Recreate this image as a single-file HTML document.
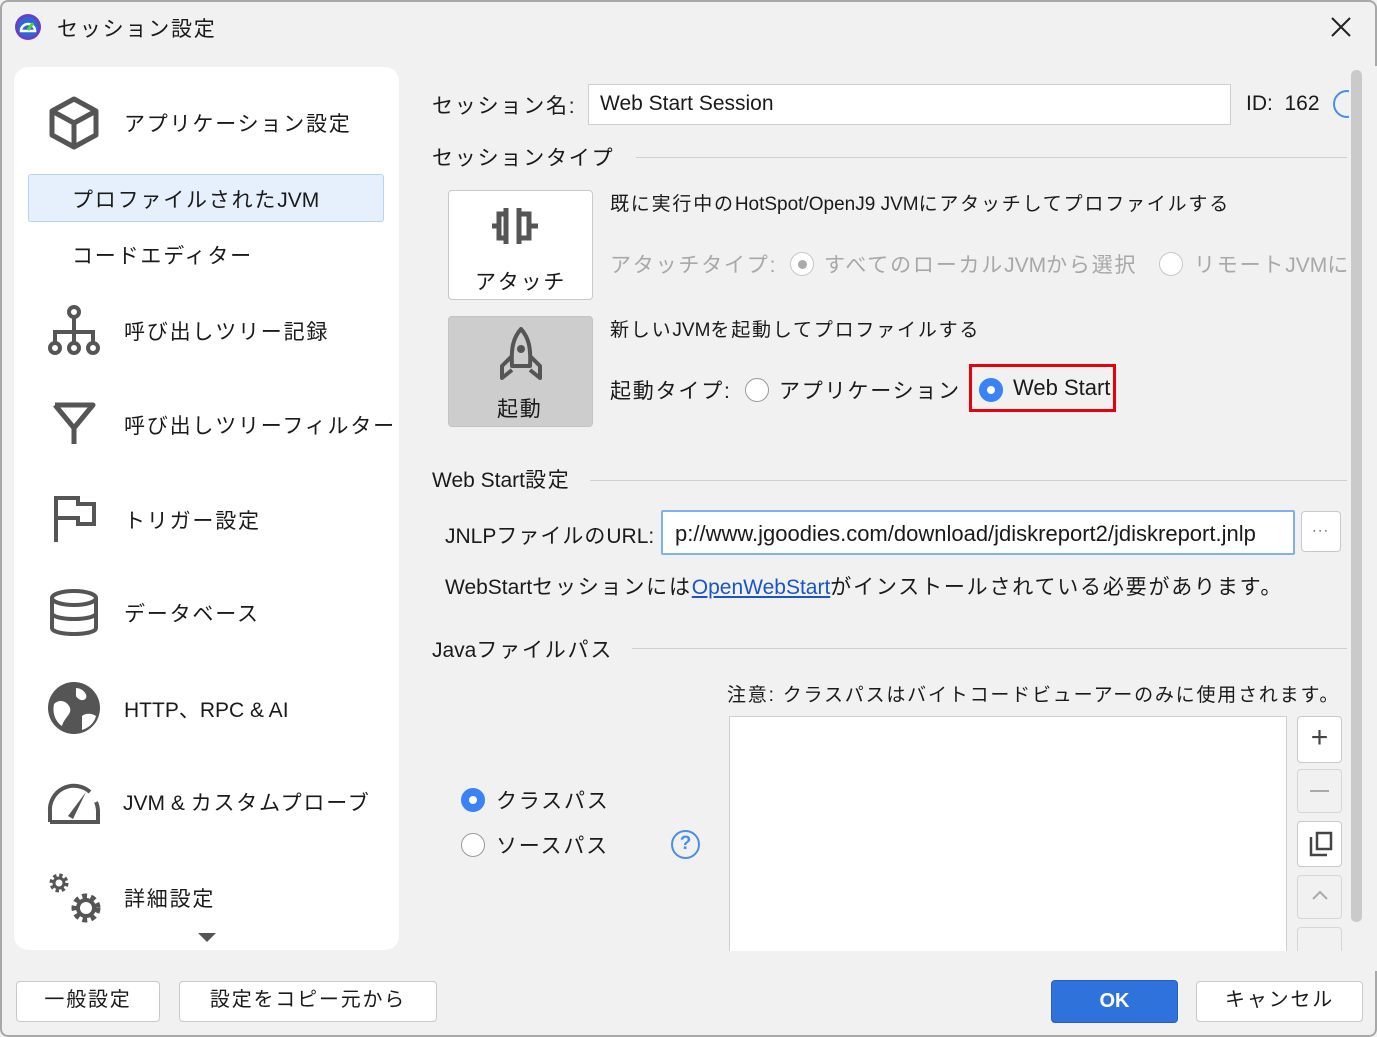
<!DOCTYPE html>
<html><head><meta charset="utf-8"><style>
*{margin:0;padding:0;box-sizing:border-box}
body{width:1377px;height:1037px;background:#f1f1f1;font-family:"Liberation Sans","Noto Sans CJK JP",sans-serif;color:#1a1a1a;position:relative;overflow:hidden;letter-spacing:1.8px}
.a{position:absolute;white-space:nowrap}
.l{letter-spacing:0}
.win{position:absolute;left:0;top:0;width:1377px;height:1037px;border:2px solid #a8a8a8;border-radius:8px}
.side{position:absolute;left:14px;top:67px;width:385px;height:883px;background:#fff;border-radius:14px}
.t20{font-size:21px}
.t19{font-size:19px}
.btn{position:absolute;background:#fff;border:1.5px solid #c9c9c9;border-radius:4px;text-align:center}
.sep{position:absolute;height:1px;background:#d0d0d0}
.radio{position:absolute;width:24px;height:24px;border-radius:50%;border:1.5px solid #9a9a9a;background:#fff}
.radio.on{background:#3b82f6;border-color:#3b82f6}
.radio.on::after{content:"";position:absolute;left:7px;top:7px;width:8px;height:8px;border-radius:50%;background:#fff}
.gray{color:#a8a8a8}
</style></head><body>
<div class="win"></div>
<svg class="a" style="left:14px;top:13px" width="28" height="28" viewBox="0 0 28 28"><circle cx="14" cy="14" r="13" fill="#6a3fc4"/><circle cx="14" cy="14" r="10" fill="#2d66d6"/><path d="M7 18a7 7 0 1 1 14 0z" fill="none" stroke="#fff" stroke-width="2.5"/><path d="M14 17l5-7" stroke="#4cd137" stroke-width="3"/></svg>
<div class="a t20" style="left:57px;top:13px">セッション設定</div>
<svg class="a" style="left:1329px;top:15px" width="24" height="24"><path d="M3 3L21 21M21 3L3 21" stroke="#222" stroke-width="2"/></svg>

<div class="side"></div>
<svg class="a" style="left:48px;top:96px" width="52" height="54" viewBox="0 0 52 54"><path d="M26 3L48 15V39L26 51L4 39V15Z M4 15L26 27L48 15 M26 27V51" fill="none" stroke="#555" stroke-width="5" stroke-linejoin="round"/></svg>
<div class="a t20" style="left:124px;top:108px">アプリケーション設定</div>
<div class="a" style="left:28px;top:174px;width:356px;height:48px;background:#e6f0fc;border:1.5px solid #b7d3f4;border-radius:3px"></div>
<div class="a t20" style="left:72px;top:184px">プロファイルされた<span class="l">JVM</span></div>
<div class="a t20" style="left:72px;top:240px">コードエディター</div>
<svg class="a" style="left:46px;top:302px" width="56" height="56" viewBox="0 0 56 56"><circle cx="28" cy="10" r="5" fill="none" stroke="#555" stroke-width="4"/><path d="M28 15V30M9 40V30H47V40M28 30V40" fill="none" stroke="#555" stroke-width="4"/><circle cx="9" cy="46" r="5" fill="none" stroke="#555" stroke-width="4"/><circle cx="28" cy="46" r="5" fill="none" stroke="#555" stroke-width="4"/><circle cx="47" cy="46" r="5" fill="none" stroke="#555" stroke-width="4"/></svg>
<div class="a t20" style="left:124px;top:316px">呼び出しツリー記録</div>
<svg class="a" style="left:50px;top:400px" width="48" height="48" viewBox="0 0 48 48"><path d="M5 5H43L24 28V44" fill="none" stroke="#555" stroke-width="5" stroke-linejoin="round"/><path d="M5 5L24 28" stroke="#555" stroke-width="5"/></svg>
<div class="a t20" style="left:124px;top:410px">呼び出しツリーフィルター</div>
<svg class="a" style="left:52px;top:494px" width="46" height="50" viewBox="0 0 46 50"><path d="M4 48V4H26V10H42V30H26V24H4" fill="none" stroke="#555" stroke-width="4"/></svg>
<div class="a t20" style="left:124px;top:505px">トリガー設定</div>
<svg class="a" style="left:48px;top:588px" width="52" height="50" viewBox="0 0 52 50"><ellipse cx="26" cy="10" rx="22" ry="7" fill="none" stroke="#555" stroke-width="4"/><path d="M4 10V40C4 48 48 48 48 40V10M4 25C4 33 48 33 48 25" fill="none" stroke="#555" stroke-width="4"/></svg>
<div class="a t20" style="left:124px;top:598px">データベース</div>
<svg class="a" style="left:46px;top:680px" width="56" height="56" viewBox="0 0 56 56"><circle cx="28" cy="28" r="26" fill="#555"/><path d="M8 24c6-6 14-2 16 4s-6 10-8 18c-6-4-10-12-8-22zM30 8c6 0 12 6 10 10s-8 2-10-2zM36 36c4-4 12-2 14 0-2 8-8 12-14 14z" fill="#fff"/></svg>
<div class="a t20 l" style="left:124px;top:694px">HTTP、RPC &amp; AI</div>
<svg class="a" style="left:46px;top:776px" width="56" height="50" viewBox="0 0 56 50"><path d="M4 46V36A24 24 0 0 1 44 16M50 26A24 24 0 0 1 52 36V46H4" fill="none" stroke="#555" stroke-width="4"/><path d="M22 40L40 16L27 43Z" fill="#555"/></svg>
<div class="a t20" style="left:123px;top:787px"><span class="l">JVM &amp; </span>カスタムプローブ</div>
<svg class="a" style="left:46px;top:868px" width="58" height="58" viewBox="0 0 58 58"><circle cx="13" cy="15" r="7" fill="none" stroke="#555" stroke-width="5" stroke-dasharray="3 2.5"/><circle cx="13" cy="15" r="5" fill="none" stroke="#555" stroke-width="3"/><circle cx="40" cy="40" r="11" fill="none" stroke="#555" stroke-width="7" stroke-dasharray="4.5 3.5"/><circle cx="40" cy="40" r="8" fill="none" stroke="#555" stroke-width="4"/></svg>
<div class="a t20" style="left:124px;top:883px">詳細設定</div>
<svg class="a" style="left:198px;top:933px" width="18" height="10"><path d="M0 0H18L9 9Z" fill="#555"/></svg>

<!-- right -->
<div class="a t20" style="left:432px;top:90px">セッション名:</div>
<div class="a" style="left:588px;top:84px;width:643px;height:41px;background:#fff;border:1.5px solid #cfcfcf"></div>
<div class="a t20 l" style="left:600px;top:92px">Web Start Session</div>
<div class="a t20 l" style="left:1246px;top:92px">ID:&nbsp; 162</div>
<div class="a" style="left:1333px;top:90px;width:28px;height:28px;border:2.5px solid #4a90e2;border-radius:50%"></div>
<div class="a" style="left:1349px;top:66px;width:28px;height:900px;background:#f1f1f1"></div>
<div class="a" style="left:1351px;top:70px;width:11px;height:852px;background:#cacaca;border-radius:5px"></div>

<div class="a t20" style="left:432px;top:142px">セッションタイプ</div>
<div class="sep" style="left:636px;top:157px;width:711px"></div>
<div class="btn" style="left:448px;top:190px;width:145px;height:110px"></div>
<svg class="a" style="left:490px;top:204px" width="60" height="44" viewBox="0 0 60 44"><path d="M16 4V40M16 10H9V34H16M9 22H2M29 4V40M29 10H39V34H29M39 22H48" fill="none" stroke="#555" stroke-width="5"/></svg>
<div class="a t20" style="left:475px;top:266px">アタッチ</div>
<div class="btn" style="left:448px;top:316px;width:145px;height:111px;background:#cdcdcd;border-color:#c3c3c3"></div>
<svg class="a" style="left:498px;top:326px" width="46" height="56" viewBox="0 0 46 56"><path d="M23 3C15 12 13 22 14 40H32C33 22 31 12 23 3Z M14 30L4 40V52L14 44 M32 30L42 40V52L32 44" fill="none" stroke="#555" stroke-width="4" stroke-linejoin="round"/><circle cx="23" cy="23" r="4" fill="#555"/></svg>
<div class="a t20" style="left:497px;top:393px">起動</div>

<div class="a t19" style="left:610px;top:189px">既に実行中の<span class="l">HotSpot/OpenJ9 JVM</span>にアタッチしてプロファイルする</div>
<div class="a t20 gray" style="left:610px;top:249px">アタッチタイプ:</div>
<div class="radio" style="left:790px;top:252px;border-color:#c8c8c8"></div>
<div class="a" style="left:798px;top:260px;width:9px;height:9px;border-radius:50%;background:#aaa"></div>
<div class="a t20 gray" style="left:824px;top:249px">すべてのローカル<span class="l">JVM</span>から選択</div>
<div class="radio" style="left:1159px;top:252px;border-color:#c8c8c8"></div>
<div class="a t20 gray" style="left:1194px;top:249px;width:153px;overflow:hidden">リモート<span class="l">JVM</span>に</div>
<div class="a t19" style="left:610px;top:315px">新しい<span class="l">JVM</span>を起動してプロファイルする</div>
<div class="a t20" style="left:610px;top:375px">起動タイプ:</div>
<div class="radio" style="left:745px;top:378px"></div>
<div class="a t20" style="left:779px;top:375px">アプリケーション</div>
<div class="a" style="left:969px;top:364px;width:147px;height:48px;border:3.5px solid #e8000b"></div>
<div class="radio on" style="left:979px;top:378px"></div>
<div class="a t20 l" style="left:1013px;top:375px;font-size:22px">Web Start</div>

<div class="a t20" style="left:432px;top:464px"><span class="l">Web Start</span>設定</div>
<div class="sep" style="left:590px;top:480px;width:757px"></div>
<div class="a t20" style="left:445px;top:520px;letter-spacing:1px"><span class="l">JNLP</span>ファイルの<span class="l">URL:</span></div>
<div class="a" style="left:661px;top:510px;width:634px;height:45px;background:#fff;border:2.5px solid #7fb0f0;border-radius:2px;overflow:hidden">
<div class="a l" style="left:12px;top:9px;font-size:22px">p://www.jgoodies.com/download/jdiskreport2/jdiskreport.jnlp</div></div>
<div class="btn" style="left:1301px;top:511px;width:40px;height:41px;font-size:12px;line-height:36px">···</div>
<div class="a t20" style="left:445px;top:571px"><span class="l">WebStart</span>セッションには<span class="l" style="color:#1a55c8;text-decoration:underline">OpenWebStart</span>がインストールされている必要があります。</div>

<div class="a t20" style="left:432px;top:634px"><span class="l">Java</span>ファイルパス</div>
<div class="sep" style="left:632px;top:648px;width:715px"></div>
<div class="a t19" style="left:727px;top:680px">注意: クラスパスはバイトコードビューアーのみに使用されます。</div>
<div class="a" style="left:729px;top:716px;width:558px;height:240px;background:#fff;border:1.5px solid #cfcfcf"></div>
<div class="btn" style="left:1297px;top:716px;width:45px;height:47px;font-size:30px;line-height:42px;color:#444;letter-spacing:0">+</div>
<div class="btn" style="left:1297px;top:769px;width:45px;height:44px;background:#f1f1f1;border-color:#d6d6d6"><div class="a" style="left:12px;top:20px;width:19px;height:2px;background:#aaa"></div></div>
<div class="btn" style="left:1297px;top:821px;width:45px;height:46px"><svg class="a" style="left:11px;top:9px" width="24" height="26"><path d="M2 6V24H18M8 2H22V18H8Z" fill="none" stroke="#444" stroke-width="2.5"/></svg></div>
<div class="btn" style="left:1297px;top:875px;width:45px;height:44px;background:#f1f1f1;border-color:#d6d6d6"><svg class="a" style="left:14px;top:14px" width="16" height="10"><path d="M1 9L8 2L15 9" fill="none" stroke="#aaa" stroke-width="2"/></svg></div>
<div class="btn" style="left:1297px;top:927px;width:45px;height:30px;background:#f1f1f1;border-color:#d6d6d6"></div>
<div class="a" style="left:400px;top:951px;width:977px;height:20px;background:#f1f1f1"></div>

<div class="radio on" style="left:461px;top:788px"></div>
<div class="a t20" style="left:496px;top:785px">クラスパス</div>
<div class="radio" style="left:461px;top:833px"></div>
<div class="a t20" style="left:496px;top:830px">ソースパス</div>
<div class="a l" style="left:671px;top:830px;width:29px;height:29px;border:2.5px solid #4a90e2;border-radius:50%;color:#4a90e2;font-size:19px;text-align:center;line-height:24px;font-weight:bold">?</div>

<div class="btn" style="left:16px;top:981px;width:144px;height:41px;font-size:20px;line-height:37px">一般設定</div>
<div class="btn" style="left:179px;top:981px;width:258px;height:41px;font-size:20px;line-height:37px">設定をコピー元から</div>
<div class="a l" style="left:1051px;top:980px;width:127px;height:43px;background:#2f72db;border:1px solid #2561c0;border-radius:4px;color:#fff;font-weight:bold;font-size:20px;text-align:center;line-height:41px">OK</div>
<div class="btn" style="left:1196px;top:981px;width:167px;height:41px;font-size:20px;line-height:37px">キャンセル</div>
</body></html>
